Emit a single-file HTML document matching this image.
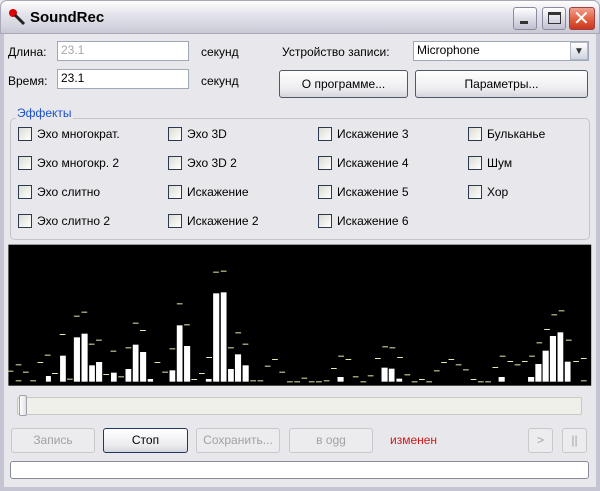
<!DOCTYPE html>
<html><head><meta charset="utf-8"><style>
*{margin:0;padding:0;box-sizing:border-box}
body{width:600px;height:491px;overflow:hidden;background:#e8e8ec;font-family:"Liberation Sans","DejaVu Sans",sans-serif;font-size:12px;color:#000;position:relative}
.a{position:absolute;white-space:nowrap}
.frame{left:0;top:0;width:600px;height:491px;border:4px solid #c4c4d2;border-top:none;border-radius:7px 7px 0 0}
.title{left:0;top:0;width:600px;height:34px;background:linear-gradient(#fefefe,#e4e4ec 40%,#d4d4de 80%,#c8c8d4);border-radius:7px 7px 0 0;border:1px solid #a8a8b8}
.tb{top:7px;width:24px;height:23px;border:1px solid #8a8aa0;border-radius:3px;background:linear-gradient(#ffffff,#d8d8e4 60%,#c0c0d0)}
.inp{background:#fff;border:1px solid #a0a8b8;height:20px;padding:1px 3px;font-size:12px}
.btn{border:1px solid #505868;border-radius:3px;background:linear-gradient(#ffffff,#ececf0 70%,#d4d4dc);text-align:center;line-height:26px;font-size:12px}
.dis{border-color:#c8c8cc;color:#a0a0a8;background:#ececee}
.cb{width:14px;height:14px;border:1px solid #2c3a50;background:linear-gradient(135deg,#dcdcd4,#ffffff)}
</style></head><body>
<div class="a frame"></div>
<div class="a title"></div>
<svg class="a" style="left:8px;top:8px" width="20" height="20" viewBox="0 0 20 20"><circle cx="5" cy="5" r="4" fill="#d00"/><line x1="7" y1="7" x2="16" y2="16" stroke="#222" stroke-width="3"/></svg>
<div class="a" style="left:30px;top:9px;font-weight:bold;font-size:15px;color:#000">SoundRec</div>
<div class="a tb" style="left:513px"><div class="a" style="left:6px;top:13px;width:8px;height:3px;background:#333"></div></div>
<div class="a tb" style="left:542px"><div class="a" style="left:5px;top:4px;width:13px;height:12px;border:1px solid #333;border-top-width:3px"></div></div>
<div class="a tb" style="left:569px;width:26px;background:linear-gradient(#f0a090,#e05838 60%,#c83820);border-color:#a04040"><div class="a" style="left:3px;top:-2px;color:#fff;font-size:20px;font-weight:bold">✕</div></div>

<div class="a" style="left:8px;top:45px">Длина:</div>
<div class="a inp" style="left:57px;top:41px;width:132px;color:#a8a8a8">23.1</div>
<div class="a" style="left:201px;top:45px">секунд</div>
<div class="a" style="left:8px;top:74px">Время:</div>
<div class="a inp" style="left:57px;top:69px;width:132px">23.1</div>
<div class="a" style="left:201px;top:74px">секунд</div>
<div class="a" style="left:282px;top:45px">Устройство записи:</div>
<div class="a inp" style="left:413px;top:41px;width:176px">Microphone</div>
<div class="a" style="left:570px;top:42px;width:18px;height:18px;background:linear-gradient(#fff,#d0d4e0);border:1px solid #b0b8c8;font-size:10px;text-align:center;line-height:17px;color:#333">▼</div>
<div class="a btn" style="left:279px;top:70px;width:129px;height:28px">О программе...</div>
<div class="a btn" style="left:415px;top:70px;width:173px;height:28px">Параметры...</div>

<div class="a" style="left:10px;top:118px;width:580px;height:122px;border:1px solid #c4c4cc;border-radius:5px"></div>
<div class="a" style="left:16px;top:106px;background:#e8e8ec;color:#1a50c8;padding:0 1px">Эффекты</div>

<div class="a cb" style="left:18px;top:127px"></div><div class="a" style="left:37px;top:127px">Эхо многократ.</div>
<div class="a cb" style="left:18px;top:156px"></div><div class="a" style="left:37px;top:156px">Эхо многокр. 2</div>
<div class="a cb" style="left:18px;top:185px"></div><div class="a" style="left:37px;top:185px">Эхо слитно</div>
<div class="a cb" style="left:18px;top:214px"></div><div class="a" style="left:37px;top:214px">Эхо слитно 2</div>
<div class="a cb" style="left:168px;top:127px"></div><div class="a" style="left:187px;top:127px">Эхо 3D</div>
<div class="a cb" style="left:168px;top:156px"></div><div class="a" style="left:187px;top:156px">Эхо 3D 2</div>
<div class="a cb" style="left:168px;top:185px"></div><div class="a" style="left:187px;top:185px">Искажение</div>
<div class="a cb" style="left:168px;top:214px"></div><div class="a" style="left:187px;top:214px">Искажение 2</div>
<div class="a cb" style="left:318px;top:127px"></div><div class="a" style="left:337px;top:127px">Искажение 3</div>
<div class="a cb" style="left:318px;top:156px"></div><div class="a" style="left:337px;top:156px">Искажение 4</div>
<div class="a cb" style="left:318px;top:185px"></div><div class="a" style="left:337px;top:185px">Искажение 5</div>
<div class="a cb" style="left:318px;top:214px"></div><div class="a" style="left:337px;top:214px">Искажение 6</div>
<div class="a cb" style="left:468px;top:127px"></div><div class="a" style="left:487px;top:127px">Бульканье</div>
<div class="a cb" style="left:468px;top:156px"></div><div class="a" style="left:487px;top:156px">Шум</div>
<div class="a cb" style="left:468px;top:185px"></div><div class="a" style="left:487px;top:185px">Хор</div>

<svg class="a" style="left:0;top:240px" width="600" height="150" viewBox="0 0 1568 450" preserveAspectRatio="none">
<rect x="22" y="14" width="1523" height="423" fill="#000"/>
<g fill="#fff">
<rect x="120" y="408" width="13" height="17"/><rect x="157" y="347" width="15" height="78"/><rect x="193" y="292" width="16" height="133"/><rect x="213" y="281" width="16" height="144"/><rect x="233" y="376" width="15" height="49"/><rect x="251" y="366" width="16" height="59"/><rect x="290" y="398" width="15" height="27"/><rect x="328" y="387" width="15" height="38"/><rect x="347" y="314" width="15" height="111"/><rect x="366" y="336" width="16" height="89"/><rect x="386" y="417" width="14" height="8"/><rect x="443" y="391" width="15" height="34"/><rect x="462" y="256" width="15" height="169"/><rect x="481" y="318" width="16" height="107"/><rect x="538" y="417" width="15" height="8"/><rect x="557" y="160" width="16" height="265"/><rect x="577" y="157" width="15" height="268"/><rect x="596" y="387" width="15" height="38"/><rect x="614" y="343" width="16" height="82"/><rect x="634" y="376" width="16" height="49"/><rect x="882" y="411" width="16" height="14"/><rect x="997" y="383" width="16" height="42"/><rect x="1016" y="386" width="15" height="39"/><rect x="1036" y="416" width="15" height="9"/><rect x="1303" y="411" width="16" height="14"/><rect x="1380" y="411" width="16" height="14"/><rect x="1399" y="372" width="16" height="53"/><rect x="1418" y="332" width="16" height="93"/><rect x="1437" y="288" width="16" height="137"/><rect x="1457" y="277" width="15" height="148"/><rect x="1476" y="365" width="15" height="60"/>
</g>
<g fill="#e8e8a8">
<rect x="20" y="392" width="15" height="3"/><rect x="41" y="373" width="15" height="3"/><rect x="41" y="421" width="15" height="3"/><rect x="60" y="395" width="15" height="3"/><rect x="79" y="421" width="15" height="3"/><rect x="98" y="366" width="15" height="3"/><rect x="117" y="344" width="15" height="3"/><rect x="136" y="399" width="15" height="3"/><rect x="156" y="282" width="15" height="3"/><rect x="175" y="416" width="15" height="3"/><rect x="193" y="227" width="15" height="3"/><rect x="213" y="215" width="15" height="3"/><rect x="232" y="311" width="15" height="3"/><rect x="251" y="299" width="15" height="3"/><rect x="270" y="402" width="15" height="3"/><rect x="289" y="332" width="15" height="3"/><rect x="309" y="409" width="15" height="3"/><rect x="328" y="322" width="15" height="3"/><rect x="347" y="248" width="15" height="3"/><rect x="366" y="270" width="15" height="3"/><rect x="404" y="366" width="15" height="3"/><rect x="424" y="395" width="15" height="3"/><rect x="443" y="325" width="15" height="3"/><rect x="462" y="190" width="15" height="3"/><rect x="481" y="253" width="15" height="3"/><rect x="500" y="417" width="15" height="3"/><rect x="520" y="399" width="15" height="3"/><rect x="539" y="351" width="15" height="3"/><rect x="557" y="95" width="15" height="3"/><rect x="577" y="92" width="15" height="3"/><rect x="615" y="277" width="15" height="3"/><rect x="596" y="322" width="15" height="3"/><rect x="634" y="311" width="15" height="3"/><rect x="654" y="421" width="15" height="3"/><rect x="673" y="421" width="15" height="3"/><rect x="692" y="377" width="15" height="3"/><rect x="711" y="357" width="15" height="3"/><rect x="730" y="395" width="15" height="3"/><rect x="750" y="424" width="15" height="3"/><rect x="769" y="424" width="15" height="3"/><rect x="788" y="413" width="15" height="3"/><rect x="807" y="424" width="15" height="3"/><rect x="826" y="424" width="15" height="3"/><rect x="846" y="421" width="15" height="3"/><rect x="865" y="384" width="15" height="3"/><rect x="884" y="347" width="15" height="3"/><rect x="903" y="357" width="15" height="3"/><rect x="922" y="409" width="15" height="3"/><rect x="942" y="424" width="15" height="3"/><rect x="961" y="406" width="15" height="3"/><rect x="980" y="354" width="15" height="3"/><rect x="999" y="319" width="15" height="3"/><rect x="1018" y="322" width="15" height="3"/><rect x="1038" y="351" width="15" height="3"/><rect x="1057" y="403" width="15" height="3"/><rect x="1076" y="424" width="15" height="3"/><rect x="1095" y="417" width="15" height="3"/><rect x="1114" y="424" width="15" height="3"/><rect x="1134" y="391" width="15" height="3"/><rect x="1153" y="366" width="15" height="3"/><rect x="1172" y="357" width="15" height="3"/><rect x="1191" y="373" width="15" height="3"/><rect x="1210" y="388" width="15" height="3"/><rect x="1230" y="417" width="15" height="3"/><rect x="1249" y="424" width="15" height="3"/><rect x="1268" y="424" width="15" height="3"/><rect x="1287" y="381" width="15" height="3"/><rect x="1306" y="347" width="15" height="3"/><rect x="1326" y="363" width="15" height="3"/><rect x="1345" y="373" width="15" height="3"/><rect x="1364" y="363" width="15" height="3"/><rect x="1383" y="347" width="15" height="3"/><rect x="1402" y="307" width="15" height="3"/><rect x="1422" y="267" width="15" height="3"/><rect x="1441" y="223" width="15" height="3"/><rect x="1460" y="211" width="15" height="3"/><rect x="1479" y="299" width="15" height="3"/><rect x="1498" y="363" width="15" height="3"/><rect x="1518" y="354" width="15" height="3"/><rect x="1518" y="421" width="15" height="3"/>
</g>
</svg>

<div class="a" style="left:17px;top:397px;width:565px;height:18px;background:#f0f0ea;border:1px solid #c8c8c8;border-radius:2px"></div>
<div class="a" style="left:19px;top:395px;width:8px;height:21px;background:linear-gradient(90deg,#fff,#e0e0e4);border:1px solid #a0a0a8;border-radius:2px"></div>

<div class="a btn dis" style="left:11px;top:428px;width:84px;height:25px;line-height:23px">Запись</div>
<div class="a btn" style="left:103px;top:428px;width:85px;height:25px;line-height:23px;border-color:#203860">Стоп</div>
<div class="a btn dis" style="left:196px;top:428px;width:84px;height:25px;line-height:23px">Сохранить...</div>
<div class="a btn dis" style="left:289px;top:428px;width:84px;height:25px;line-height:23px">в ogg</div>
<div class="a" style="left:390px;top:433px;color:#d01818">изменен</div>
<div class="a btn dis" style="left:528px;top:428px;width:25px;height:25px;line-height:23px">&gt;</div>
<div class="a btn dis" style="left:562px;top:428px;width:25px;height:25px;line-height:23px">||</div>
<div class="a" style="left:10px;top:461px;width:579px;height:18px;background:#fff;border:1px solid #888c98;border-radius:3px"></div>
</body></html>
